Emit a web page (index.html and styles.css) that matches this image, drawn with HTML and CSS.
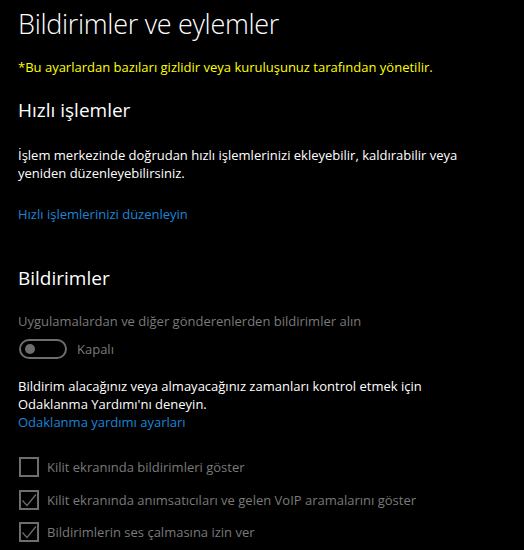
FILE: index.html
```html
<!DOCTYPE html>
<html lang="tr">
<head>
    <meta charset="UTF-8">
    <title>Bildirimler ve eylemler</title>
    <link rel="stylesheet" href="styles.css">
</head>
<body>

<div class="page">
    <h1 class="title">Bildirimler ve eylemler</h1>
    <p class="managed">*Bu ayarlardan bazıları gizlidir veya kuruluşunuz tarafından yönetilir.</p>

    <h2 class="section-title">Hızlı işlemler</h2>
    <p class="text">İşlem merkezinde doğrudan hızlı işlemlerinizi ekleyebilir, kaldırabilir veya yeniden düzenleyebilirsiniz.</p>
    <a class="link link-edit" href="#">Hızlı işlemlerinizi düzenleyin</a>

    <h2 class="section-title section-notify">Bildirimler</h2>
    <p class="text disabled">Uygulamalardan ve diğer gönderenlerden bildirimler alın</p>
    <div class="toggle-row">
        <span class="toggle"><span class="knob"></span></span>
        <span class="toggle-label">Kapalı</span>
    </div>

    <p class="text focus-text">Bildirim alacağınız veya almayacağınız zamanları kontrol etmek için Odaklanma Yardımı'nı deneyin.</p>
    <a class="link" href="#">Odaklanma yardımı ayarları</a>

    <ul class="checks">
        <li><span class="box"></span>Kilit ekranında bildirimleri göster</li>
        <li><span class="box"><svg viewBox="0 0 20 20" width="20" height="20"><path d="M3.5 10.5 L8 15.5 L17 4.5" fill="none" stroke="#6e6e6e" stroke-width="1.2"/></svg></span>Kilit ekranında anımsatıcıları ve gelen VoIP aramalarını göster</li>
        <li><span class="box"><svg viewBox="0 0 20 20" width="20" height="20"><path d="M3.5 10.5 L8 15.5 L17 4.5" fill="none" stroke="#6e6e6e" stroke-width="1.2"/></svg></span>Bildirimlerin ses çalmasına izin ver</li>
    </ul>
</div>

</body>
</html>
```

FILE: styles.css
```css
body {
    margin: 0;
    background: #000;
    color: #fff;
    font-family: 'Open Sans', 'Noto Sans', sans-serif;
    font-size: 13px;
}

.page {
    padding: 4px 18px 0 18px;
}

.title {
    font-weight: 300;
    font-size: 27px;
    margin: 0;
    line-height: 40px;
    letter-spacing: -0.3px;
}

.managed {
    color: #ffff00;
    margin: 14px 0 0;
    line-height: 18px;
}

.section-title {
    font-weight: 400;
    font-size: 19px;
    margin: 20px 0 0;
    line-height: 28px;
}

.text {
    margin: 0;
    line-height: 18px;
    max-width: 470px;
}

.section-title + .text {
    margin-top: 22px;
}

.link {
    display: block;
    color: #1a86d9;
    text-decoration: none;
    line-height: 19px;
}

.link-edit {
    margin-top: 23px;
}

.section-notify {
    margin-top: 40px;
}

.disabled {
    color: #7a7a7a;
}

.section-notify + .disabled {
    margin-top: 20px;
}

.toggle-row {
    display: flex;
    align-items: center;
    gap: 10px;
    margin-top: 9px;
    padding-left: 1px;
}

.toggle {
    width: 36px;
    height: 16px;
    border: 2px solid #6e6e6e;
    border-radius: 10px;
    display: flex;
    align-items: center;
    padding: 0 4px;
}

.knob {
    width: 10px;
    height: 10px;
    border-radius: 50%;
    background: #6e6e6e;
}

.toggle-label {
    color: #7a7a7a;
}

.focus-text {
    margin-top: 18px;
}

.checks {
    list-style: none;
    margin: 24px 0 0;
    padding: 1px 0 0 1px;
}

.checks li {
    display: flex;
    align-items: center;
    gap: 8px;
    color: #7a7a7a;
    height: 20px;
    margin-bottom: 12.5px;
}

.box {
    width: 16px;
    height: 16px;
    border: 2px solid #6e6e6e;
    flex-shrink: 0;
    position: relative;
}

.box svg {
    position: absolute;
    left: -2px;
    top: -2px;
}
```
